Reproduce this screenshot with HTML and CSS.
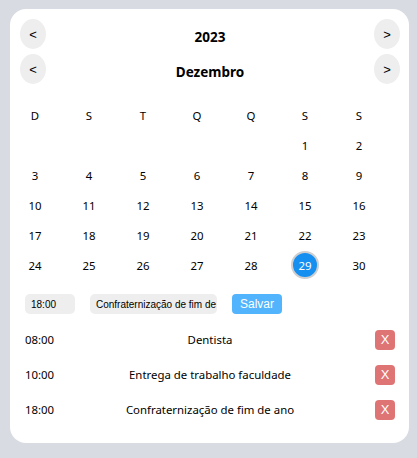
FILE: index.html
```html
<!DOCTYPE html>
<html lang="pt-BR">
<head>
<meta charset="utf-8">
<title>Calendário</title>
<link rel="stylesheet" href="styles.css">
</head>
<body>
<div class="card">
  <div class="nav">
    <button class="nav-btn">&lt;</button>
    <div class="nav-title">2023</div>
    <button class="nav-btn">&gt;</button>
  </div>
  <div class="nav">
    <button class="nav-btn">&lt;</button>
    <div class="nav-title">Dezembro</div>
    <button class="nav-btn">&gt;</button>
  </div>

  <div class="grid">
    <div class="cell">D</div><div class="cell">S</div><div class="cell">T</div><div class="cell">Q</div><div class="cell">Q</div><div class="cell">S</div><div class="cell">S</div>
    <div class="cell"></div><div class="cell"></div><div class="cell"></div><div class="cell"></div><div class="cell"></div><div class="cell">1</div><div class="cell">2</div>
    <div class="cell">3</div><div class="cell">4</div><div class="cell">5</div><div class="cell">6</div><div class="cell">7</div><div class="cell">8</div><div class="cell">9</div>
    <div class="cell">10</div><div class="cell">11</div><div class="cell">12</div><div class="cell">13</div><div class="cell">14</div><div class="cell">15</div><div class="cell">16</div>
    <div class="cell">17</div><div class="cell">18</div><div class="cell">19</div><div class="cell">20</div><div class="cell">21</div><div class="cell">22</div><div class="cell">23</div>
    <div class="cell">24</div><div class="cell">25</div><div class="cell">26</div><div class="cell">27</div><div class="cell">28</div><div class="cell"><span class="selected">29</span></div><div class="cell">30</div>
  </div>

  <div class="form">
    <input class="input input-time" type="text" value="18:00">
    <input class="input input-text" type="text" value="Confraternização de fim de ano">
    <button class="save">Salvar</button>
  </div>

  <div class="list">
    <div class="item"><span class="time">08:00</span><span class="title">Dentista</span><span class="del-wrap"><button class="del">X</button></span></div>
    <div class="item"><span class="time">10:00</span><span class="title">Entrega de trabalho faculdade</span><span class="del-wrap"><button class="del">X</button></span></div>
    <div class="item"><span class="time">18:00</span><span class="title">Confraternização de fim de ano</span><span class="del-wrap"><button class="del">X</button></span></div>
  </div>
</div>
</body>
</html>
```

FILE: styles.css
```css
html, body {
  margin: 0;
  padding: 0;
}
body {
  background: #d8dbe2;
  font-family: "Noto Sans", "Open Sans", sans-serif;
  font-size: 11.4px;
  color: #000;
  padding: 9px 8px 15px 10px;
}
.card {
  background: #fff;
  border-radius: 16px;
  padding: 10px 9px 16px 10px;
}
.nav {
  display: flex;
  align-items: center;
  justify-content: space-between;
  height: 30px;
}
.nav + .nav {
  margin-top: 5px;
}
.nav-btn {
  width: 26px;
  height: 30px;
  border: none;
  border-radius: 50%;
  background: #eeeeee;
  font-family: "Liberation Sans", Arial, sans-serif;
  font-size: 13px;
  color: #000;
  padding: 0;
}
.nav-title {
  font-weight: bold;
  font-size: 13.5px;
  padding-top: 5px;
}
.grid {
  margin-top: 16px;
  display: grid;
  grid-template-columns: repeat(7, 30px);
  grid-auto-rows: 30px;
  column-gap: 24px;
}
.cell {
  display: flex;
  align-items: center;
  justify-content: center;
}
.selected {
  width: 28px;
  height: 28px;
  box-sizing: border-box;
  border-radius: 50%;
  background: #158ff0;
  border: 2px solid #cfcfcf;
  color: #fff;
  display: flex;
  align-items: center;
  justify-content: center;
}
.form {
  margin-top: 14px;
  padding-left: 5px;
  display: flex;
  align-items: center;
  gap: 15px;
}
.input {
  height: 20px;
  box-sizing: border-box;
  border: none;
  border-radius: 5px;
  background: #eeeeee;
  padding: 0 6px;
  font-family: "Liberation Sans", Arial, sans-serif;
  font-size: 10px;
  color: #000;
  outline: none;
}
.input-time { width: 50px; }
.input-text { width: 127px; padding-right: 0; }
.save {
  width: 50px;
  height: 20px;
  border: none;
  border-radius: 4px;
  background: #51b4fc;
  color: #fff;
  font-family: "Liberation Sans", Arial, sans-serif;
  font-size: 12px;
  padding: 0;
}
.list {
  margin-top: 8px;
  padding: 0 5px;
}
.item {
  display: grid;
  grid-template-columns: 60px 1fr 60px;
  align-items: center;
  height: 35px;
}
.title {
  text-align: center;
}
.del-wrap {
  display: flex;
  justify-content: flex-end;
}
.del {
  width: 20px;
  height: 20px;
  border: none;
  border-radius: 4px;
  background: #df7474;
  color: #fff;
  font-family: "Liberation Sans", Arial, sans-serif;
  font-size: 13px;
  padding: 0;
}
```
